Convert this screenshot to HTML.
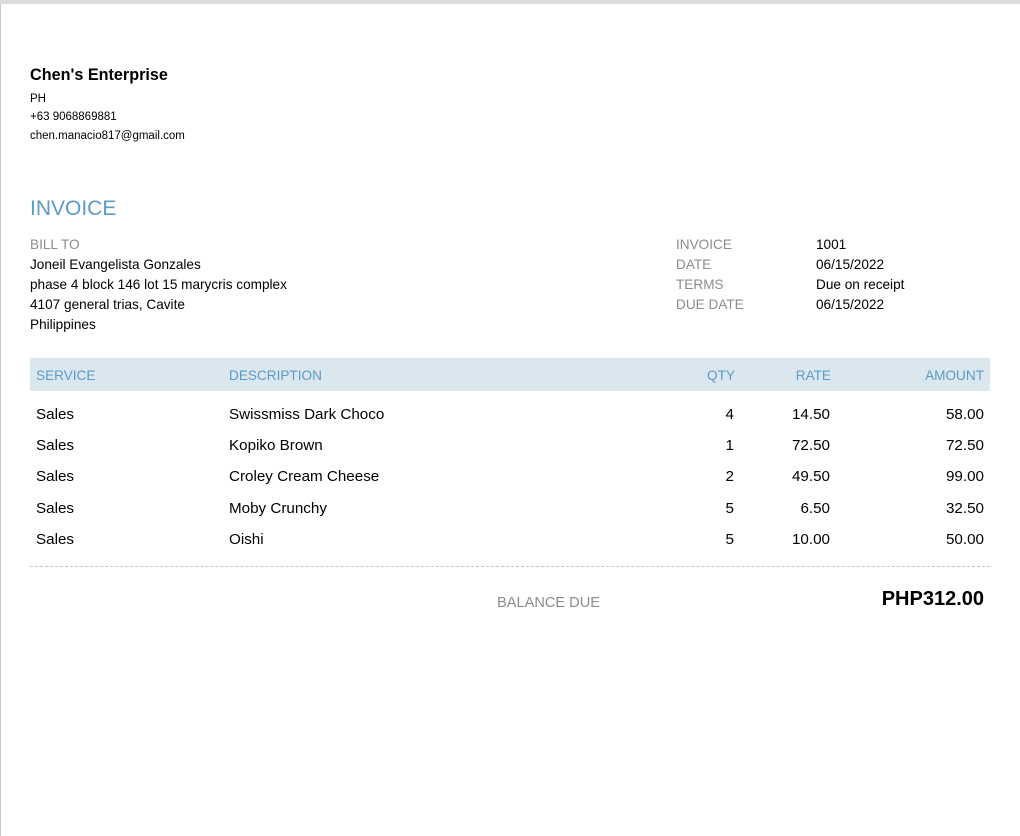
<!DOCTYPE html>
<html><head><meta charset="utf-8"><style>
*{margin:0;padding:0;box-sizing:border-box}
body{width:1020px;height:836px;background:#fff;font-family:"Liberation Sans",Arial,sans-serif;color:#000;position:relative;overflow:hidden}
.a{position:absolute;white-space:nowrap}
.g{color:#8c8c8c}
.b{color:#5b9bc6}
.s{font-size:11.5px}
.m{font-size:13.6px}
.r{text-align:right}
.t{font-size:15.2px}
</style></head><body>
<div class="a" style="left:0;top:0;width:1020px;height:4px;background:#dcdcdc"></div>
<div class="a" style="left:0;top:4px;width:1px;height:832px;background:#c8c8c8"></div>

<div class="a" style="left:30px;top:66px;font-size:16.2px;font-weight:bold">Chen's Enterprise</div>
<div class="a s" style="left:30px;top:93px">PH</div>
<div class="a s" style="left:30px;top:111px">+63 9068869881</div>
<div class="a s" style="left:30px;top:130px">chen.manacio817@gmail.com</div>

<div class="a b" style="left:30px;top:197px;font-size:21px">INVOICE</div>
<div class="a m g" style="left:30px;top:237px">BILL TO</div>
<div class="a m" style="left:30px;top:257px">Joneil Evangelista Gonzales</div>
<div class="a m" style="left:30px;top:277px">phase 4 block 146 lot 15 marycris complex</div>
<div class="a m" style="left:30px;top:297px">4107 general trias, Cavite</div>
<div class="a m" style="left:30px;top:317px">Philippines</div>

<div class="a m g" style="left:676px;top:237px">INVOICE</div>
<div class="a m g" style="left:676px;top:257px">DATE</div>
<div class="a m g" style="left:676px;top:277px">TERMS</div>
<div class="a m g" style="left:676px;top:297px">DUE DATE</div>
<div class="a m" style="left:816px;top:237px">1001</div>
<div class="a m" style="left:816px;top:257px">06/15/2022</div>
<div class="a m" style="left:816px;top:277px">Due on receipt</div>
<div class="a m" style="left:816px;top:297px">06/15/2022</div>

<div class="a" style="left:30px;top:358px;width:960px;height:33px;background:#dbe7ef"></div>
<div class="a m b" style="left:36px;top:368px">SERVICE</div>
<div class="a m b" style="left:229px;top:368px">DESCRIPTION</div>
<div class="a m b r" style="left:635px;width:100px;top:368px">QTY</div>
<div class="a m b r" style="left:731px;width:100px;top:368px">RATE</div>
<div class="a m b r" style="left:834px;width:150px;top:368px">AMOUNT</div>

<div class="a t" style="left:36px;top:406px">Sales</div>
<div class="a t" style="left:229px;top:406px">Swissmiss Dark Choco</div>
<div class="a t r" style="left:634px;width:100px;top:406px">4</div>
<div class="a t r" style="left:730px;width:100px;top:406px">14.50</div>
<div class="a t r" style="left:834px;width:150px;top:406px">58.00</div>

<div class="a t" style="left:36px;top:437px">Sales</div>
<div class="a t" style="left:229px;top:437px">Kopiko Brown</div>
<div class="a t r" style="left:634px;width:100px;top:437px">1</div>
<div class="a t r" style="left:730px;width:100px;top:437px">72.50</div>
<div class="a t r" style="left:834px;width:150px;top:437px">72.50</div>

<div class="a t" style="left:36px;top:468px">Sales</div>
<div class="a t" style="left:229px;top:468px">Croley Cream Cheese</div>
<div class="a t r" style="left:634px;width:100px;top:468px">2</div>
<div class="a t r" style="left:730px;width:100px;top:468px">49.50</div>
<div class="a t r" style="left:834px;width:150px;top:468px">99.00</div>

<div class="a t" style="left:36px;top:500px">Sales</div>
<div class="a t" style="left:229px;top:500px">Moby Crunchy</div>
<div class="a t r" style="left:634px;width:100px;top:500px">5</div>
<div class="a t r" style="left:730px;width:100px;top:500px">6.50</div>
<div class="a t r" style="left:834px;width:150px;top:500px">32.50</div>

<div class="a t" style="left:36px;top:531px">Sales</div>
<div class="a t" style="left:229px;top:531px">Oishi</div>
<div class="a t r" style="left:634px;width:100px;top:531px">5</div>
<div class="a t r" style="left:730px;width:100px;top:531px">10.00</div>
<div class="a t r" style="left:834px;width:150px;top:531px">50.00</div>

<div class="a" style="left:30px;top:566px;width:960px;border-top:1px dashed #c4c4c4"></div>
<div class="a g" style="left:497px;top:595px;font-size:14.6px">BALANCE DUE</div>
<div class="a r" style="left:784px;width:200px;top:588px;font-size:20px;font-weight:bold">PHP312.00</div>
</body></html>
